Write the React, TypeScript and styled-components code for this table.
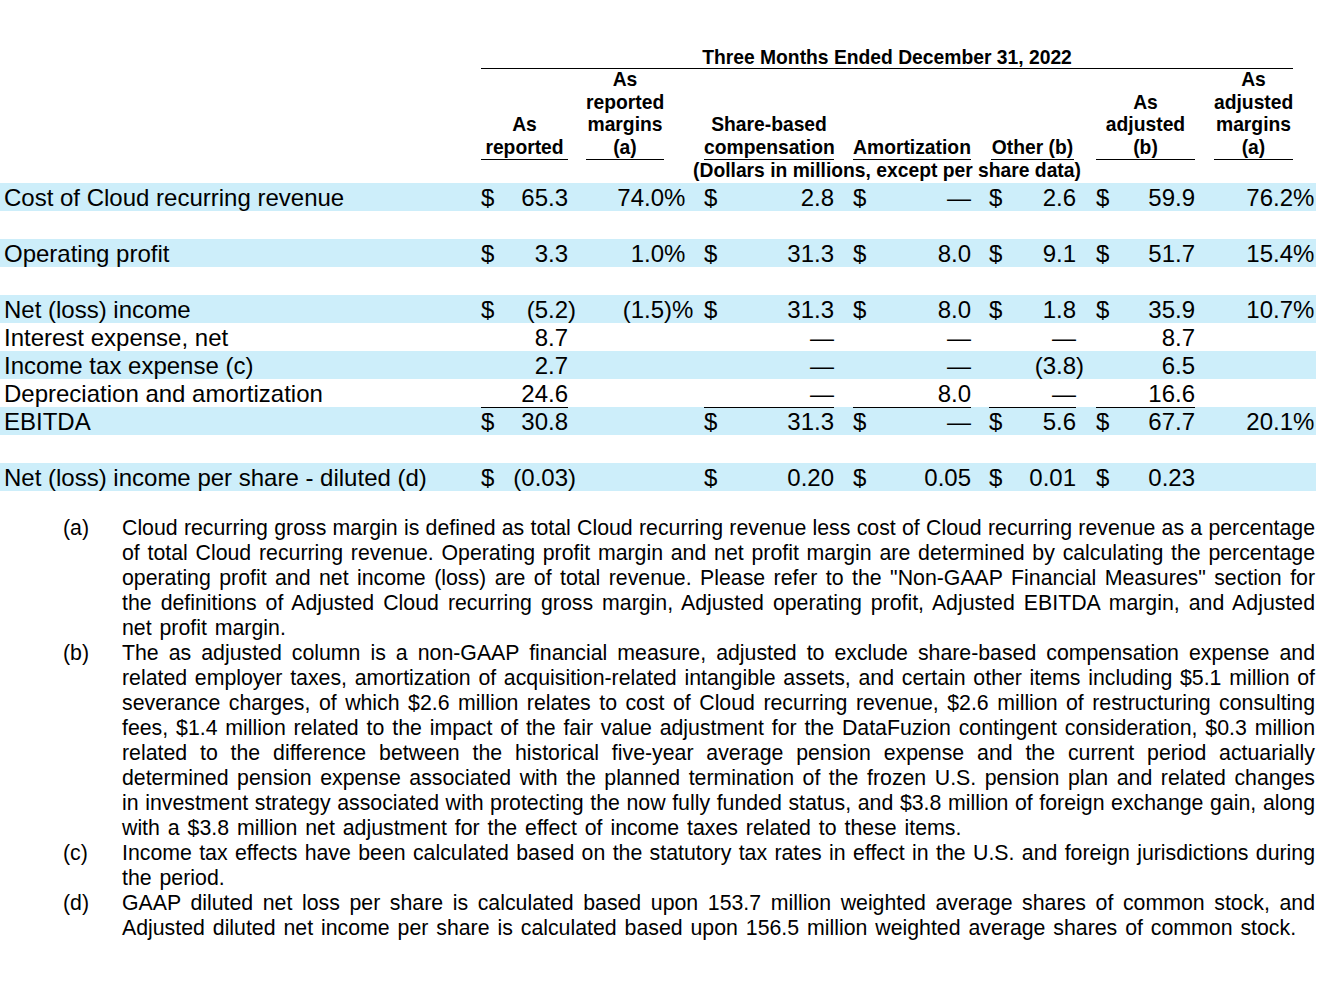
import React from "react";
import styled, { createGlobalStyle } from "styled-components";

const GlobalStyle = createGlobalStyle`
  html, body { margin: 0; padding: 0; background: #ffffff; }
  body { font-family: "Liberation Sans", Arial, sans-serif; color: #000000; }
`;

const COLS = "481px 87px 96px 170px 137px 105px 119px 98px 23px";
const LEADS = [0, 18, 40, 19, 18, 20, 19];
const SHADE = "#cdeefa";

const Page = styled.div`
  width: 1316px;
  padding-top: 47px;
`;

const HeaderGrid = styled.div`
  display: grid;
  grid-template-columns: ${COLS};
  font-weight: bold;
  font-size: 19.3px;
  line-height: 22.5px;
`;

const SpanTitle = styled.div`
  grid-column: 2 / 9;
  grid-row: 1;
  height: 21px;
  line-height: 21px;
  text-align: center;
  border-bottom: 1px solid #000;
  white-space: nowrap;
`;

const HeadCell = styled.div<{ $col: number; $lead: number; $inset?: number }>`
  grid-column: ${(p) => p.$col};
  grid-row: 2;
  display: flex;
  align-items: flex-end;
  padding-left: ${(p) => p.$lead}px;
  padding-right: ${(p) => p.$inset ?? 0}px;
`;

const HeadBox = styled.div`
  width: 100%;
  text-align: center;
  border-bottom: 1px solid #000;
  white-space: nowrap;
`;

const Units = styled.div`
  grid-column: 2 / 9;
  grid-row: 3;
  height: 23px;
  line-height: 22px;
  text-align: center;
  white-space: nowrap;
`;

const Row = styled.div<{ $shade?: boolean }>`
  display: grid;
  grid-template-columns: ${COLS};
  height: 28px;
  line-height: 30px;
  font-size: 24px;
  background: ${(p) => (p.$shade ? SHADE : "transparent")};
`;

const Label = styled.div`
  padding-left: 4px;
  height: 28px;
  white-space: nowrap;
`;

const Cell = styled.div<{ $lead: number }>`
  padding-left: ${(p) => p.$lead}px;
  height: 28px;
`;

const CellBox = styled.div<{ $rule?: boolean }>`
  display: flex;
  justify-content: space-between;
  height: 28px;
  white-space: nowrap;
  box-shadow: ${(p) => (p.$rule ? "inset 0 1px 0 #000" : "none")};
`;

const Hang = styled.span`
  display: inline-block;
  width: 0;
  white-space: nowrap;
`;

const Notes = styled.div`
  width: 1315px;
  padding-top: 25px;
  font-size: 21.3px;
  line-height: 25px;
`;

const Note = styled.div`
  display: grid;
  grid-template-columns: 122px 1fr;
`;

const Marker = styled.div`
  padding-left: 63px;
`;

const Line = styled.div<{ $last?: boolean }>`
  text-align: ${(p) => (p.$last ? "left" : "justify")};
  text-align-last: ${(p) => (p.$last ? "left" : "justify")};
  word-spacing: ${(p) => (p.$last ? "2px" : "-1px")};
  white-space: nowrap;
`;

type V = [string, string, string?] | null;
type RowData = { label?: string; shade?: boolean; rule?: boolean; v?: V[] };

const rows: RowData[] = [
  {
    label: "Cost of Cloud recurring revenue",
    shade: true,
    v: [["$", "65.3"], ["", "74.0", "%"], ["$", "2.8"], ["$", "—"], ["$", "2.6"], ["$", "59.9"], ["", "76.2", "%"]],
  },
  {},
  {
    label: "Operating profit",
    shade: true,
    v: [["$", "3.3"], ["", "1.0", "%"], ["$", "31.3"], ["$", "8.0"], ["$", "9.1"], ["$", "51.7"], ["", "15.4", "%"]],
  },
  {},
  {
    label: "Net (loss) income",
    shade: true,
    v: [["$", "(5.2", ")"], ["", "(1.5", ")%"], ["$", "31.3"], ["$", "8.0"], ["$", "1.8"], ["$", "35.9"], ["", "10.7", "%"]],
  },
  {
    label: "Interest expense, net",
    v: [["", "8.7"], null, ["", "—"], ["", "—"], ["", "—"], ["", "8.7"], null],
  },
  {
    label: "Income tax expense (c)",
    shade: true,
    v: [["", "2.7"], null, ["", "—"], ["", "—"], ["", "(3.8", ")"], ["", "6.5"], null],
  },
  {
    label: "Depreciation and amortization",
    v: [["", "24.6"], null, ["", "—"], ["", "8.0"], ["", "—"], ["", "16.6"], null],
  },
  {
    label: "EBITDA",
    shade: true,
    rule: true,
    v: [["$", "30.8"], null, ["$", "31.3"], ["$", "—"], ["$", "5.6"], ["$", "67.7"], ["", "20.1", "%"]],
  },
  {},
  {
    label: "Net (loss) income per share - diluted (d)",
    shade: true,
    v: [["$", "(0.03", ")"], null, ["$", "0.20"], ["$", "0.05"], ["$", "0.01"], ["$", "0.23"], null],
  },
];

const RULE_COLS = [0, 2, 3, 4, 5];

const heads: { text: string[]; inset?: number; lead?: number }[] = [
  { text: ["As", "reported"] },
  { text: ["As", "reported", "margins", "(a)"] },
  { text: ["Share-based", "compensation"] },
  { text: ["Amortization"] },
  { text: ["Other (b)"], lead: 20, inset: 2 },
  { text: ["As", "adjusted", "(b)"] },
  { text: ["As", "adjusted", "margins", "(a)"] },
];

const notes: { mark: string; lines: string[] }[] = [
  {
    mark: "(a)",
    lines: [
      "Cloud recurring gross margin is defined as total Cloud recurring revenue less cost of Cloud recurring revenue as a percentage",
      "of total Cloud recurring revenue. Operating profit margin and net profit margin are determined by calculating the percentage",
      'operating profit and net income (loss) are of total revenue. Please refer to the "Non-GAAP Financial Measures" section for',
      "the definitions of Adjusted Cloud recurring gross margin, Adjusted operating profit, Adjusted EBITDA margin, and Adjusted",
      "net profit margin.",
    ],
  },
  {
    mark: "(b)",
    lines: [
      "The as adjusted column is a non-GAAP financial measure, adjusted to exclude share-based compensation expense and",
      "related employer taxes, amortization of acquisition-related intangible assets, and certain other items including $5.1 million of",
      "severance charges, of which $2.6 million relates to cost of Cloud recurring revenue, $2.6 million of restructuring consulting",
      "fees,  $1.4 million related to the impact of the fair value adjustment for the DataFuzion contingent consideration, $0.3 million",
      "related to the difference between the historical five-year average pension expense and the current period actuarially",
      "determined pension expense associated with the planned termination of the frozen U.S. pension plan and related changes",
      "in investment strategy associated with protecting the now fully funded status, and $3.8 million of foreign exchange gain, along",
      "with a $3.8 million net adjustment for the effect of income taxes related to these items.",
    ],
  },
  {
    mark: "(c)",
    lines: [
      "Income tax effects have been calculated based on the statutory tax rates in effect in the U.S. and foreign jurisdictions during",
      "the period.",
    ],
  },
  {
    mark: "(d)",
    lines: [
      "GAAP diluted net loss per share is calculated based upon 153.7 million weighted average shares of common stock, and",
      "Adjusted diluted net income per share is calculated based upon 156.5 million weighted average shares of common stock.",
    ],
  },
];

export default function App() {
  return (
    <Page>
      <GlobalStyle />
      <HeaderGrid>
        <SpanTitle>Three Months Ended December 31, 2022</SpanTitle>
        {heads.map((h, i) => (
          <HeadCell key={i} $col={i + 2} $lead={h.lead ?? LEADS[i]} $inset={h.inset}>
            <HeadBox>
              {h.text.map((t, j) => (
                <div key={j}>{t}</div>
              ))}
            </HeadBox>
          </HeadCell>
        ))}
        <Units>(Dollars in millions, except per share data)</Units>
      </HeaderGrid>
      {rows.map((r, i) => (
        <Row key={i} $shade={r.shade}>
          <Label>{r.label ?? ""}</Label>
          {LEADS.map((lead, c) => {
            const v = r.v ? r.v[c] : null;
            return (
              <Cell key={c} $lead={lead}>
                <CellBox $rule={r.rule && RULE_COLS.includes(c)}>
                  <span>{v ? v[0] : ""}</span>
                  <span>
                    {v ? v[1] : ""}
                    {v && v[2] ? <Hang>{v[2]}</Hang> : null}
                  </span>
                </CellBox>
              </Cell>
            );
          })}
          <div />
        </Row>
      ))}
      <Notes>
        {notes.map((n) => (
          <Note key={n.mark}>
            <Marker>{n.mark}</Marker>
            <div>
              {n.lines.map((l, j) => (
                <Line key={j} $last={j === n.lines.length - 1}>
                  {l}
                </Line>
              ))}
            </div>
          </Note>
        ))}
      </Notes>
    </Page>
  );
}
